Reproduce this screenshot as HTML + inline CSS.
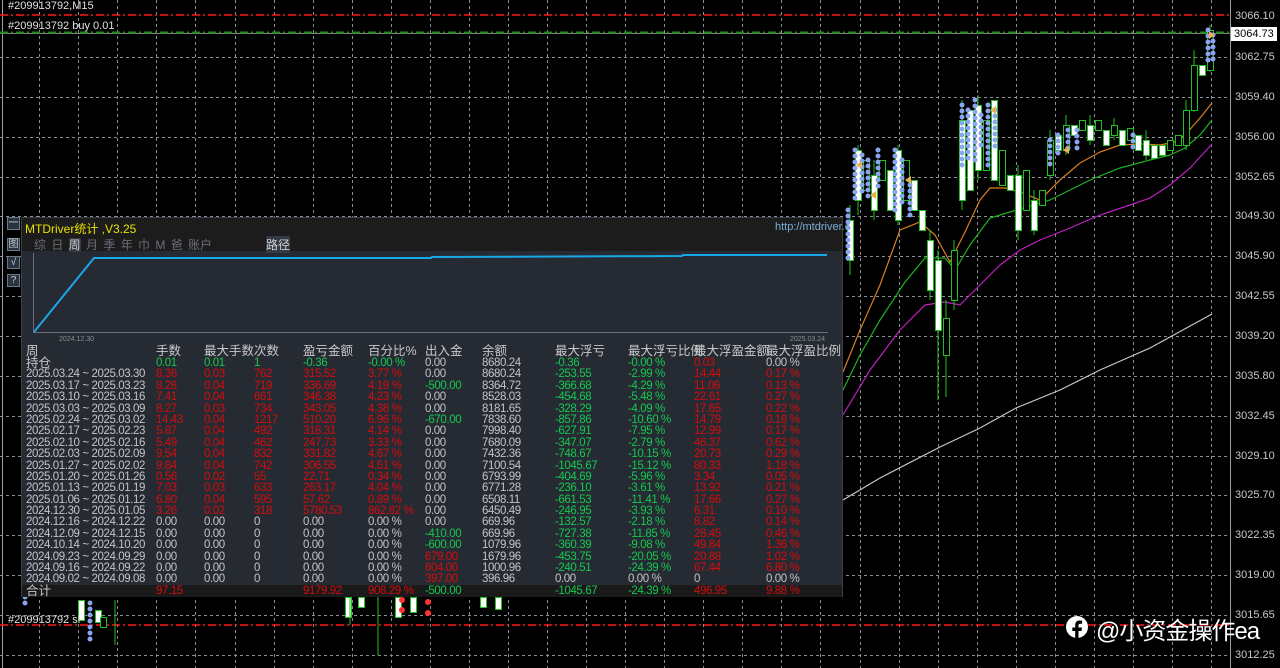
<!DOCTYPE html>
<html><head><meta charset="utf-8"><style>
*{margin:0;padding:0;box-sizing:border-box}
body{width:1280px;height:668px;background:#000;overflow:hidden;position:relative;font-family:"Liberation Sans","Noto Sans CJK SC",sans-serif;color:#c8c8c8}
.a{position:absolute;white-space:nowrap}
#panel{position:absolute;left:21px;top:217px;width:822px;height:380px;background:#262b33;border:1px solid #3a3f48}
.t{font-size:11.5px;line-height:11.4px;letter-spacing:-0.4px}
.h{font-size:12.5px;letter-spacing:0}
.r{color:#d40c0c}.g{color:#14c850}.w{color:#c4c4c4}
.btn{position:absolute;left:7px;width:13px;height:13px;background:#2a3340;border:1px solid #6a7888;font-size:10px;line-height:11px;text-align:center;color:#c8d0d8}
.ax{position:absolute;left:1235px;font-size:11px;color:#c8c8c8}
</style></head><body>
<svg class="a" style="left:0;top:0" width="1280" height="668">
<g stroke="#8a8e96" stroke-width="1" stroke-dasharray="3 3">
<line x1="0" y1="57.5" x2="1230" y2="57.5"/><line x1="0" y1="97.5" x2="1230" y2="97.5"/><line x1="0" y1="137.5" x2="1230" y2="137.5"/><line x1="0" y1="177.5" x2="1230" y2="177.5"/><line x1="0" y1="216.5" x2="1230" y2="216.5"/><line x1="0" y1="256.5" x2="1230" y2="256.5"/><line x1="0" y1="296.5" x2="1230" y2="296.5"/><line x1="0" y1="336.5" x2="1230" y2="336.5"/><line x1="0" y1="376.5" x2="1230" y2="376.5"/><line x1="0" y1="416.5" x2="1230" y2="416.5"/><line x1="0" y1="456.5" x2="1230" y2="456.5"/><line x1="0" y1="495.5" x2="1230" y2="495.5"/><line x1="0" y1="535.5" x2="1230" y2="535.5"/><line x1="0" y1="575.5" x2="1230" y2="575.5"/><line x1="0" y1="615.5" x2="1230" y2="615.5"/><line x1="0" y1="655.5" x2="1230" y2="655.5"/>
<line x1="39.5" y1="0" x2="39.5" y2="668"/><line x1="78.5" y1="0" x2="78.5" y2="668"/><line x1="117.5" y1="0" x2="117.5" y2="668"/><line x1="156.5" y1="0" x2="156.5" y2="668"/><line x1="195.5" y1="0" x2="195.5" y2="668"/><line x1="235.5" y1="0" x2="235.5" y2="668"/><line x1="274.5" y1="0" x2="274.5" y2="668"/><line x1="313.5" y1="0" x2="313.5" y2="668"/><line x1="352.5" y1="0" x2="352.5" y2="668"/><line x1="391.5" y1="0" x2="391.5" y2="668"/><line x1="430.5" y1="0" x2="430.5" y2="668"/><line x1="469.5" y1="0" x2="469.5" y2="668"/><line x1="508.5" y1="0" x2="508.5" y2="668"/><line x1="547.5" y1="0" x2="547.5" y2="668"/><line x1="586.5" y1="0" x2="586.5" y2="668"/><line x1="625.5" y1="0" x2="625.5" y2="668"/><line x1="664.5" y1="0" x2="664.5" y2="668"/><line x1="703.5" y1="0" x2="703.5" y2="668"/><line x1="742.5" y1="0" x2="742.5" y2="668"/><line x1="781.5" y1="0" x2="781.5" y2="668"/><line x1="820.5" y1="0" x2="820.5" y2="668"/><line x1="860.5" y1="0" x2="860.5" y2="668"/><line x1="899.5" y1="0" x2="899.5" y2="668"/><line x1="938.5" y1="0" x2="938.5" y2="668"/><line x1="977.5" y1="0" x2="977.5" y2="668"/><line x1="1016.5" y1="0" x2="1016.5" y2="668"/><line x1="1055.5" y1="0" x2="1055.5" y2="668"/><line x1="1094.5" y1="0" x2="1094.5" y2="668"/><line x1="1133.5" y1="0" x2="1133.5" y2="668"/><line x1="1172.5" y1="0" x2="1172.5" y2="668"/><line x1="1211.5" y1="0" x2="1211.5" y2="668"/>
</g>
<line x1="2.5" y1="0" x2="2.5" y2="668" stroke="#9aa0a8"/>
<line x1="1230.5" y1="0" x2="1230.5" y2="668" stroke="#9aa0a8"/>
<line x1="0" y1="15" x2="1230" y2="15" stroke="#ff1818" stroke-width="1.6" stroke-dasharray="8 3 2 3"/>
<line x1="0" y1="33.5" x2="1230" y2="33.5" stroke="#888"/>
<line x1="0" y1="32.5" x2="1230" y2="32.5" stroke="#1a8a1a" stroke-width="2" stroke-dasharray="8 3 2 3"/>
<line x1="0" y1="625" x2="1230" y2="625" stroke="#ff1818" stroke-width="1.6" stroke-dasharray="8 3 2 3"/>
<g fill="none" stroke-width="1.2">
<polyline stroke="#c8c8c8" points="843,500 880,478 940,447 980,428 1016,408 1060,390 1100,370 1150,348 1212,314"/>
<polyline stroke="#c020c0" points="843,415 870,370 900,330 925,305 945,302 960,305 980,285 1000,265 1020,250 1040,240 1070,228 1100,215 1130,205 1150,198 1170,185 1190,168 1212,144"/>
<polyline stroke="#20b020" points="843,390 860,355 880,320 905,282 925,258 945,258 955,270 970,245 990,218 1010,212 1030,206 1050,200 1070,190 1090,180 1120,168 1150,160 1170,155 1185,148 1200,135 1212,120"/>
<polyline stroke="#d88020" points="843,372 860,330 880,285 900,230 920,222 935,235 950,262 965,232 980,200 990,188 1005,188 1020,192 1040,200 1060,180 1080,163 1100,152 1120,145 1140,144 1160,145 1175,142 1185,135 1200,118 1212,103"/>
</g>
<g stroke="#20c020" stroke-width="1">
<line x1="850" y1="205" x2="850" y2="275"/><line x1="858" y1="145" x2="858" y2="215"/><line x1="874" y1="160" x2="874" y2="220"/><line x1="898" y1="145" x2="898" y2="225"/><line x1="930" y1="230" x2="930" y2="300"/><line x1="938" y1="250" x2="938" y2="400"/><line x1="946" y1="300" x2="946" y2="397"/><line x1="954" y1="240" x2="954" y2="310"/><line x1="962" y1="100" x2="962" y2="210"/><line x1="978" y1="95" x2="978" y2="180"/><line x1="1018" y1="165" x2="1018" y2="240"/><line x1="1034" y1="190" x2="1034" y2="235"/><line x1="1050" y1="130" x2="1050" y2="180"/><line x1="1066" y1="115" x2="1066" y2="155"/><line x1="1090" y1="115" x2="1090" y2="145"/><line x1="1114" y1="118" x2="1114" y2="140"/><line x1="1146" y1="130" x2="1146" y2="160"/><line x1="1186" y1="100" x2="1186" y2="150"/><line x1="1194" y1="50" x2="1194" y2="112"/><line x1="1210" y1="25" x2="1210" y2="72"/>
</g>
<g stroke="#20c020" stroke-width="1" fill="#fff">
<rect x="847.5" y="220.5" width="6" height="40"/><rect x="855.5" y="150.5" width="6" height="50"/><rect x="863.5" y="160.5" width="6" height="30" fill="#000"/><rect x="871.5" y="175.5" width="6" height="35"/><rect x="879.5" y="160.5" width="6" height="20" fill="#000"/><rect x="887.5" y="170.5" width="6" height="40"/><rect x="895.5" y="150.5" width="6" height="70"/><rect x="903.5" y="160.5" width="6" height="40" fill="#000"/><rect x="911.5" y="180.5" width="6" height="30"/><rect x="919.5" y="210.5" width="6" height="20"/><rect x="927.5" y="240.5" width="6" height="50"/><rect x="935.5" y="260.5" width="6" height="70"/><rect x="943.5" y="318.5" width="6" height="37" fill="#000"/><rect x="951.5" y="250.5" width="6" height="50" fill="#000"/><rect x="959.5" y="120.5" width="6" height="80"/><rect x="967.5" y="110.5" width="6" height="80"/><rect x="975.5" y="105.5" width="6" height="65"/><rect x="983.5" y="120.5" width="6" height="50" fill="#000"/><rect x="991.5" y="100.5" width="6" height="80"/><rect x="999.5" y="150.5" width="6" height="35" fill="#000"/><rect x="1007.5" y="175.5" width="6" height="15"/><rect x="1015.5" y="175.5" width="6" height="55"/><rect x="1023.5" y="170.5" width="6" height="40" fill="#000"/><rect x="1031.5" y="200.5" width="6" height="30"/><rect x="1039.5" y="190.5" width="6" height="15" fill="#000"/><rect x="1047.5" y="140.5" width="6" height="35" fill="#000"/><rect x="1055.5" y="135.5" width="6" height="15"/><rect x="1063.5" y="125.5" width="6" height="25" fill="#000"/><rect x="1071.5" y="125.5" width="6" height="10"/><rect x="1079.5" y="120.5" width="6" height="10" fill="#000"/><rect x="1087.5" y="125.5" width="6" height="15"/><rect x="1095.5" y="120.5" width="6" height="10" fill="#000"/><rect x="1103.5" y="130.5" width="6" height="15"/><rect x="1111.5" y="125.5" width="6" height="10" fill="#000"/><rect x="1119.5" y="130.5" width="6" height="15"/><rect x="1127.5" y="128.5" width="6" height="12" fill="#000"/><rect x="1135.5" y="135.5" width="6" height="15"/><rect x="1143.5" y="140.5" width="6" height="15"/><rect x="1151.5" y="145.5" width="6" height="13"/><rect x="1159.5" y="145.5" width="6" height="10"/><rect x="1167.5" y="140.5" width="6" height="10" fill="#000"/><rect x="1175.5" y="135.5" width="6" height="10" fill="#000"/><rect x="1183.5" y="110.5" width="6" height="35" fill="#000"/><rect x="1191.5" y="65.5" width="6" height="45" fill="#000"/><rect x="1199.5" y="65.5" width="6" height="10"/><rect x="1207.5" y="30.5" width="6" height="40" fill="#000"/>
<rect x="345.5" y="597.5" width="6" height="20"/><rect x="358.5" y="597.5" width="6" height="10"/><rect x="395.5" y="597.5" width="6" height="20"/><rect x="410.5" y="597.5" width="6" height="15"/><rect x="480.5" y="597.5" width="6" height="10"/><rect x="495.5" y="597.5" width="6" height="12"/><rect x="78.5" y="600.5" width="6" height="20"/><rect x="95.5" y="610.5" width="6" height="12"/><rect x="100.5" y="617.5" width="6" height="10" fill="#000"/>
<line x1="378" y1="597" x2="378" y2="655"/><line x1="350" y1="597" x2="350" y2="625"/><line x1="115" y1="600" x2="115" y2="645"/>
</g>
<g stroke="#8aa4f0" stroke-width="5" stroke-linecap="round" stroke-dasharray="0 6">
<line x1="848" y1="210" x2="848" y2="260"/><line x1="855" y1="150" x2="855" y2="200"/><line x1="862" y1="155" x2="862" y2="195"/><line x1="868" y1="160" x2="868" y2="200"/><line x1="878" y1="150" x2="878" y2="190"/><line x1="895" y1="150" x2="895" y2="215"/><line x1="902" y1="160" x2="902" y2="205"/><line x1="910" y1="185" x2="910" y2="220"/><line x1="962" y1="105" x2="962" y2="170"/><line x1="968" y1="110" x2="968" y2="160"/><line x1="975" y1="100" x2="975" y2="165"/><line x1="981" y1="115" x2="981" y2="150"/><line x1="988" y1="105" x2="988" y2="170"/><line x1="995" y1="110" x2="995" y2="150"/><line x1="1050" y1="140" x2="1050" y2="165"/><line x1="1058" y1="135" x2="1058" y2="155"/><line x1="1068" y1="130" x2="1068" y2="150"/><line x1="1077" y1="130" x2="1077" y2="150"/><line x1="1133" y1="135" x2="1133" y2="148"/><line x1="1208" y1="30" x2="1208" y2="65"/><line x1="1213" y1="35" x2="1213" y2="60"/><line x1="90" y1="603" x2="90" y2="640"/><line x1="25" y1="597" x2="25" y2="605"/>
</g>
<g fill="#e8b050"><path d="M856,165l6,-4v8z"/><path d="M870,195l6,-4v8z"/><path d="M905,180l6,-4v8z"/><path d="M990,110l6,-4v8z"/><path d="M1215,35l-6,-4v8z"/><path d="M1063,150l6,-4v8z"/></g>
<g fill="#ff3030"><circle cx="402" cy="600" r="3"/><circle cx="402" cy="610" r="3"/><circle cx="428" cy="602" r="3"/><circle cx="428" cy="613" r="3"/></g>
</svg>
<div class="a" style="left:8px;top:0;font-size:11px;color:#e0e0e0">#209913792,M15</div>
<div class="a" style="left:8px;top:20px;font-size:11px;color:#e0e0e0">#209913792 buy 0.01</div>
<div class="a" style="left:8px;top:614px;font-size:11px;color:#e0e0e0">#209913792 sl</div>
<div class="ax" style="top:10px">3066.10</div>
<div class="a" style="left:1231px;top:27px;width:46px;height:14px;background:#fff;color:#000;font-size:11px;line-height:14px;padding-left:3px">3064.73</div>
<div class="ax" style="top:51px">3062.75</div><div class="ax" style="top:91px">3059.40</div><div class="ax" style="top:131px">3056.00</div><div class="ax" style="top:171px">3052.65</div><div class="ax" style="top:210px">3049.30</div><div class="ax" style="top:250px">3045.90</div><div class="ax" style="top:290px">3042.55</div><div class="ax" style="top:330px">3039.20</div><div class="ax" style="top:370px">3035.80</div><div class="ax" style="top:410px">3032.45</div><div class="ax" style="top:450px">3029.10</div><div class="ax" style="top:489px">3025.70</div><div class="ax" style="top:529px">3022.35</div><div class="ax" style="top:569px">3019.00</div><div class="ax" style="top:609px">3015.65</div><div class="ax" style="top:649px">3012.25</div>

<div class="btn" style="top:217px">一</div><div class="btn" style="top:238px">图</div><div class="btn" style="top:256px">√</div><div class="btn" style="top:274px">?</div>

<div id="panel">
<div class="a" style="left:0;top:0;width:820px;height:33px;background:#1c1c1c"></div>
<div class="a" style="left:3px;top:2px;font-size:12px;color:#e8e000">MTDriver统计 ,V3.25</div>
<div class="a" style="left:753px;top:3px;font-size:11px;color:#7ab0d8">http://mtdriver.c</div>
<div class="a" style="left:12px;top:18px;font-size:12px;color:#6a6e76;word-spacing:2px">综 日 <span style="background:#333a46;color:#c8c8c8">周</span> 月 季 年 巾 M 爸 账户</div>
<div class="a" style="left:244px;top:18px;font-size:12px;color:#d0d0d0;background:#333a46">路径</div>
<svg class="a" style="left:0;top:33px" width="820" height="95">
<line x1="11.5" y1="2" x2="11.5" y2="81" stroke="#6a6e76"/>
<line x1="11" y1="81.5" x2="806" y2="81.5" stroke="#6a6e76"/>
<polyline fill="none" stroke="#18a8e8" stroke-width="2" points="12,81 72,7 409,7 410,6 660,5 661,4 805,4"/>
<text x="37" y="90" font-size="7" fill="#8a8e96" font-family="Liberation Sans">2024.12.30</text>
<text x="768" y="90" font-size="7" fill="#8a8e96" font-family="Liberation Sans">2025.03.24</text>
</svg>
<div class="a" style="left:0;top:367px;width:820px;height:12px;background:#1a1a1a"></div>
<div class="a t" style="left:0;top:128px;width:820px">
<div class="h" style="position:relative;height:11.4px"><span class="a" style="left:4px">周</span><span class="a" style="left:134px">手数</span><span class="a" style="left:182px">最大手数</span><span class="a" style="left:232px">次数</span><span class="a" style="left:281px">盈亏金额</span><span class="a" style="left:346px">百分比%</span><span class="a" style="left:403px">出入金</span><span class="a" style="left:460px">余额</span><span class="a" style="left:533px">最大浮亏</span><span class="a" style="left:606px">最大浮亏比例</span><span class="a" style="left:672px">最大浮盈金额</span><span class="a" style="left:744px">最大浮盈比例</span></div>
</div>
<div id="rows" class="a t" style="left:0;top:140px;width:820px"></div>
</div>

<svg class="a" style="left:1065px;top:615px" width="25" height="25"><circle cx="12" cy="12" r="11" fill="#fff"/><path d="M13.5 24v-8h3l.5-3.5h-3.5v-2c0-1 .4-1.7 1.8-1.7h1.8V5.7c-.4 0-1.4-.2-2.6-.2-2.6 0-4.3 1.6-4.3 4.4v2.6H7.3V16h2.9v8z" fill="#000"/></svg>
<div class="a" style="left:1096px;top:611px;font-size:24px;color:#fff;letter-spacing:-1px">@小资金操作ea</div>

<script>
var L=[4,134,182,232,281,346,403,460,533,606,672,744];
var D=[
["持仓","g0.01","g0.01","g1","g-0.36","g-0.00 %","w0.00","w8680.24","g-0.36","g-0.00 %","r0.03","w0.00 %"],
["2025.03.24 ~ 2025.03.30","r8.36","r0.03","r762","r315.52","r3.77 %","w0.00","w8680.24","g-253.55","g-2.99 %","r14.44","r0.17 %"],
["2025.03.17 ~ 2025.03.23","r8.28","r0.04","r719","r336.69","r4.19 %","g-500.00","w8364.72","g-366.68","g-4.29 %","r11.06","r0.13 %"],
["2025.03.10 ~ 2025.03.16","r7.41","r0.04","r661","r346.38","r4.23 %","w0.00","w8528.03","g-454.68","g-5.48 %","r22.61","r0.27 %"],
["2025.03.03 ~ 2025.03.09","r8.27","r0.03","r734","r343.05","r4.38 %","w0.00","w8181.65","g-328.29","g-4.09 %","r17.65","r0.22 %"],
["2025.02.24 ~ 2025.03.02","r14.43","r0.04","r1217","r510.20","r6.96 %","g-670.00","w7838.60","g-857.86","g-10.60 %","r14.79","r0.18 %"],
["2025.02.17 ~ 2025.02.23","r5.87","r0.04","r492","r318.31","r4.14 %","w0.00","w7998.40","g-627.91","g-7.95 %","r12.99","r0.17 %"],
["2025.02.10 ~ 2025.02.16","r5.49","r0.04","r462","r247.73","r3.33 %","w0.00","w7680.09","g-347.07","g-2.79 %","r46.37","r0.62 %"],
["2025.02.03 ~ 2025.02.09","r9.54","r0.04","r832","r331.82","r4.67 %","w0.00","w7432.36","g-748.67","g-10.15 %","r20.73","r0.29 %"],
["2025.01.27 ~ 2025.02.02","r9.84","r0.04","r742","r306.55","r4.51 %","w0.00","w7100.54","g-1045.67","g-15.12 %","r80.33","r1.18 %"],
["2025.01.20 ~ 2025.01.26","r0.56","r0.02","r55","r22.71","r0.34 %","w0.00","w6793.99","g-404.69","g-5.96 %","r3.34","r0.05 %"],
["2025.01.13 ~ 2025.01.19","r7.03","r0.03","r633","r263.17","r4.04 %","w0.00","w6771.28","g-236.10","g-3.61 %","r13.92","r0.21 %"],
["2025.01.06 ~ 2025.01.12","r6.80","r0.04","r595","r57.62","r0.89 %","w0.00","w6508.11","g-661.53","g-11.41 %","r17.66","r0.27 %"],
["2024.12.30 ~ 2025.01.05","r3.26","r0.02","r318","r5780.53","r862.82 %","w0.00","w6450.49","g-246.95","g-3.93 %","r6.31","r0.10 %"],
["2024.12.16 ~ 2024.12.22","w0.00","w0.00","w0","w0.00","w0.00 %","w0.00","w669.96","g-132.57","g-2.18 %","r8.82","r0.14 %"],
["2024.12.09 ~ 2024.12.15","w0.00","w0.00","w0","w0.00","w0.00 %","g-410.00","w669.96","g-727.38","g-11.85 %","r28.45","r0.46 %"],
["2024.10.14 ~ 2024.10.20","w0.00","w0.00","w0","w0.00","w0.00 %","g-600.00","w1079.96","g-360.39","g-9.08 %","r49.84","r1.36 %"],
["2024.09.23 ~ 2024.09.29","w0.00","w0.00","w0","w0.00","w0.00 %","r679.00","w1679.96","g-453.75","g-20.05 %","r20.88","r1.02 %"],
["2024.09.16 ~ 2024.09.22","w0.00","w0.00","w0","w0.00","w0.00 %","r604.00","w1000.96","g-240.51","g-24.39 %","r67.44","r6.80 %"],
["2024.09.02 ~ 2024.09.08","w0.00","w0.00","w0","w0.00","w0.00 %","r397.00","w396.96","w0.00","w0.00 %","w0","w0.00 %"],
["合计","r97.15","","","r9179.92","r908.29 %","g-500.00","","g-1045.67","g-24.39 %","r496.95","r9.88 %"]];
var h="";
D.forEach(function(r,k){h+='<div style="position:relative;height:11.4px">';r.forEach(function(c,i){if(!c)return;var cl="w",t=c;if(i>0){cl=c[0];t=c.slice(1);}var ex=(i==0&&(k==0||k==20))?' h':'';h+='<span class="a '+cl+ex+'" style="left:'+L[i]+'px">'+t+'</span>';});h+='</div>';});
document.getElementById("rows").innerHTML=h;
</script>
</body></html>
